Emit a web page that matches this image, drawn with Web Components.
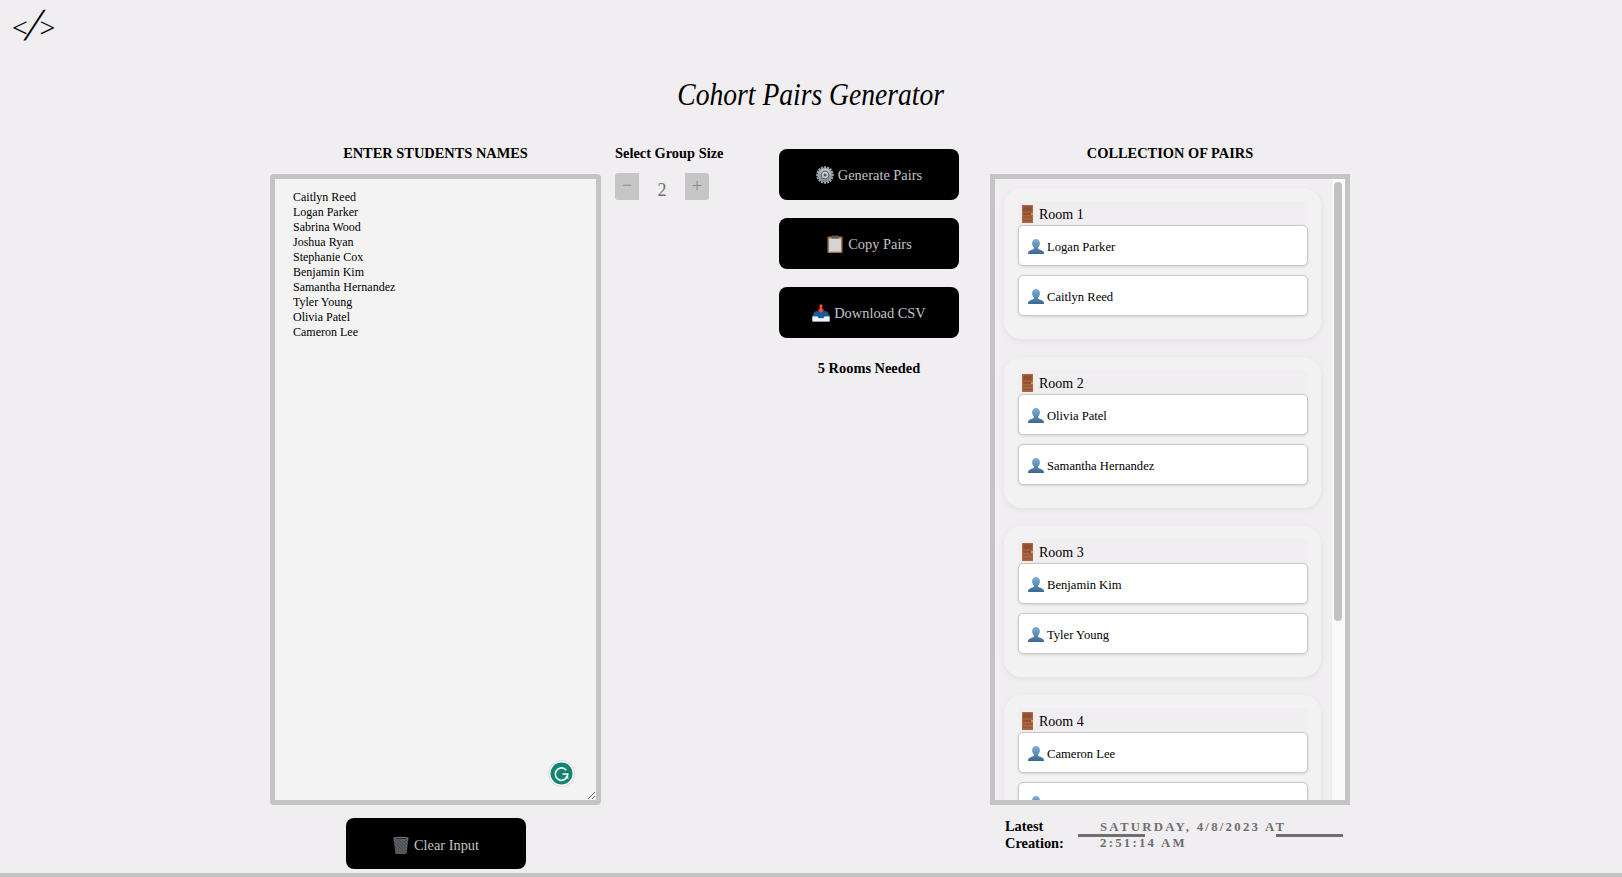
<!DOCTYPE html>
<html lang="en">
<head>
<meta charset="utf-8">
<title>Cohort Pairs Generator</title>
<style>
  html, body { margin: 0; height: 100%; }
  body { background: #f0eef0; font-family: "Liberation Serif", "Times New Roman", serif; overflow: hidden; }
</style>
</head>
<body>
<cohort-app></cohort-app>

<script>
const students = ['Caitlyn Reed', 'Logan Parker', 'Sabrina Wood', 'Joshua Ryan', 'Stephanie Cox', 'Benjamin Kim', 'Samantha Hernandez', 'Tyler Young', 'Olivia Patel', 'Cameron Lee']
// the second name of room 4 sits under the fold in the screenshot
const rooms = [
  ['Logan Parker', 'Caitlyn Reed'],
  ['Olivia Patel', 'Samantha Hernandez'],
  ['Benjamin Kim', 'Tyler Young'],
  ['Cameron Lee', '']
]

const icons = {
  gear: `<svg viewBox="0 0 18 18"><defs><linearGradient id="g" x1="0" y1="0" x2="0" y2="1"><stop offset="0" stop-color="#c4cad1"/><stop offset="1" stop-color="#7b828a"/></linearGradient></defs>
    <g fill="url(#g)"><circle cx="9" cy="9" r="7"/><g stroke="#9aa1a9" stroke-width="2.3"><path d="M9 .2v17.600M.2 9h17.600M2.800 2.800l12.400 12.400M15.200 2.800L2.800 15.200M5.600 1l6.800 16M12.400 1L5.600 17M1 5.600l16 6.800M1 12.400l16-6.800" stroke-dasharray="2.500 12.600"/></g></g>
    <circle cx="9" cy="9" r="4.300" fill="#59616a"/><circle cx="9" cy="9" r="3.200" fill="#c9ced4"/><circle cx="9" cy="9" r="1.500" fill="#4d545c"/></svg>`,
  clipboard: `<svg viewBox="0 0 18 18"><rect x="1.500" y="1.500" width="15" height="16.500" rx="1.200" fill="#a17a4c"/><rect x="3" y="3.600" width="12" height="13" fill="#d4d4d4"/><rect x="5.500" y=".5" width="7" height="3" rx=".8" fill="#5e5a55"/></svg>`,
  inbox: `<svg viewBox="0 0 18 18"><path d="M3 7.500h12l2.600 5v5H.4v-5z" fill="#2f7fc4"/><path d="M3.400 7.500h11.200l2 4.600h-4.400l-1 1.600H6.800l-1-1.600H1.400z" fill="#175a98"/><path d="M.4 12.600h5l1 1.700h5.200l1-1.700h5v5H.4z" fill="#f1f3f5"/><path d="M7.600.5h2.800v5h2.200l-3.600 3.500-3.600-3.500h2.200z" fill="#ef4b3f"/></svg>`,
  trash: `<svg viewBox="0 0 18 18"><defs><pattern id="m" width="2.400" height="2.400" patternUnits="userSpaceOnUse" patternTransform="rotate(45)"><rect width="2.400" height="2.400" fill="#5a6066"/><path d="M0 0h2.400" stroke="#2f3337" stroke-width=".9"/></pattern></defs>
    <path d="M1.500 1.800h15l-1.800 15.400q-.1.800-1 .8H4.300q-.9 0-1-.8z" fill="url(#m)"/><ellipse cx="9" cy="2.300" rx="7.700" ry="1.500" fill="#7a8086"/><ellipse cx="9" cy="2.500" rx="6.200" ry=".8" fill="#2a2d30"/></svg>`,
  door: `<svg viewBox="0 0 11 18"><rect width="11" height="18" rx=".5" fill="#ad6540"/><rect x="1.300" y="1.400" width="8.400" height="5" fill="#8f4f32"/><rect x="1.300" y="7.800" width="8.400" height="2" fill="#8f4f32"/><rect x="1.300" y="11.500" width="8.400" height="4.800" fill="#985636"/><rect x="1.300" y="13.400" width="8.400" height=".9" fill="#c07a52"/><circle cx="10" cy="9" r=".9" fill="#e2b23e"/></svg>`,
  person: `<svg viewBox="0 0 16 15"><defs><linearGradient id="p" x1="0" y1="0" x2="0" y2="1"><stop offset="0" stop-color="#7fb0d8"/><stop offset=".55" stop-color="#5a8ab4"/><stop offset="1" stop-color="#3c668f"/></linearGradient></defs>
    <path d="M8 0c2.400 0 3.900 1.900 3.900 4.300 0 1.700-.7 3.200-1.700 4.200-.2.800 0 1.300.7 1.700 1.700.8 3.800 1.300 4.700 2.600.3.500.4 1.200.4 2.200H0c0-1 .1-1.700.4-2.200.9-1.300 3-1.800 4.700-2.600.7-.4.900-.9.700-1.700-1-1-1.700-2.500-1.700-4.200C4.100 1.900 5.600 0 8 0z" fill="url(#p)"/></svg>`
}

customElements.define('ui-icon', class extends HTMLElement {
  connectedCallback () {
    const root = this.attachShadow({ mode: 'open' })
    root.innerHTML = `<style>
      :host { display: inline-block; flex: none; line-height: 0; }
      svg { width: 100%; height: 100%; display: block; }
    </style>${icons[this.getAttribute('name')]}`
  }
})

customElements.define('action-button', class extends HTMLElement {
  constructor () {
    super()
    this.attachShadow({ mode: 'open' }).innerHTML = `<style>
      :host { display: flex; width: 180px; height: 51px; box-sizing: border-box; padding-top: 1px; border-radius: 8px; background: #000; color: #c4c4c4;
        font-size: 14.4px; align-items: center; justify-content: center; gap: 4px; }
      ::slotted(ui-icon) { width: 18px; height: 18px; }
      .label { padding-top: 1px; }
    </style><slot name="icon"></slot><span class="label"><slot></slot></span>`
  }
})

customElements.define('group-stepper', class extends HTMLElement {
  constructor () {
    super()
    this.attachShadow({ mode: 'open' }).innerHTML = `<style>
      :host { display: flex; width: 94px; height: 27px; justify-content: space-between; color: #6f6f6f; }
      span { display: flex; align-items: center; justify-content: center; }
      .btn { width: 24px; height: 27px; background: #c6c6c6; color: #8b8b8b; font-size: 18px; box-sizing: border-box; }
      .minus { border-radius: 3px 0 0 3px; padding-bottom: 2px; }
      .plus { border-radius: 0 3px 3px 0; }
      .val { font-size: 18px; padding-top: 7px; }
    </style><span class="btn minus">&minus;</span><span class="val">2</span><span class="btn plus">+</span>`
  }
})

customElements.define('name-input', class extends HTMLElement {
  constructor () {
    super()
    this.attachShadow({ mode: 'open' }).innerHTML = `<style>
      :host { display: block; position: relative; height: 631px; }
      textarea { display: block; box-sizing: border-box; width: 100%; height: 100%; margin: 0; padding: 11px 18px;
        border: 5px solid #c4c4c4; border-radius: 4px; outline: none; background: #f3f3f4; color: #000;
        font: 12px/15px "Liberation Serif", serif; }
      .badge { position: absolute; right: 26px; bottom: 18px; width: 27px; height: 27px; }
    </style><textarea spellcheck="false"></textarea>
    <svg class="badge" viewBox="0 0 27 27"><circle cx="13.500" cy="13.500" r="13" fill="#fff" stroke="#d3d7e2"/><circle cx="13.500" cy="13.500" r="11" fill="#11856f"/>
    <path d="M18.300 10.200A6.200 6.200 0 1 0 19.700 14h-5.200" fill="none" stroke="#fff" stroke-width="1.700"/><path d="M17.200 17l3.200 2.200-.3-3.800z" fill="#fff"/></svg>`
    this.shadowRoot.querySelector('textarea').textContent = students.join('\n')
  }
})

customElements.define('student-card', class extends HTMLElement {
  constructor () {
    super()
    this.attachShadow({ mode: 'open' }).innerHTML = `<style>
      :host { display: flex; align-items: center; box-sizing: border-box; height: 41px; padding: 2px 9px 0; gap: 3px;
        background: #fff; border: 1px solid #c8c8c8; border-radius: 5px; box-shadow: 0 1px 3px rgba(0,0,0,.12);
        font-size: 12.6px; color: #000; }
      ui-icon { width: 16px; height: 15px; margin-top: -1px; }
      .name { padding-top: 2px; }
    </style><ui-icon name="person"></ui-icon><span class="name"><slot></slot></span>`
  }
})

customElements.define('room-card', class extends HTMLElement {
  constructor () {
    super()
    this.attachShadow({ mode: 'open' }).innerHTML = `<style>
      :host { display: block; padding: 13px 13px 23px 14px; border-radius: 18px; background: #f2f2f3; box-shadow: 0 2px 6px rgba(0,0,0,.06); }
      h3 { display: flex; align-items: flex-end; gap: 6px; margin: 0; height: 24px; padding-left: 4px; background: #f0eef0;
        font-size: 14px; font-weight: normal; line-height: 21px; color: #000; }
      ui-icon { width: 11px; height: 18px; margin-bottom: 2px; }
      ::slotted(student-card:not(:last-child)) { margin-bottom: 9px; }
    </style><h3><ui-icon name="door"></ui-icon><span></span></h3><slot></slot>`
  }

  connectedCallback () {
    this.shadowRoot.querySelector('span').textContent = this.getAttribute('label')
  }
})

customElements.define('room-list', class extends HTMLElement {
  constructor () {
    super()
    this.attachShadow({ mode: 'open' }).innerHTML = `<style>
      :host { display: flex; height: 631px; box-sizing: border-box; border: 5px solid #c4c4c4; background: #f0eef0; }
      .rooms { flex: 1; min-width: 0; overflow: hidden; box-sizing: border-box; padding: 9px 10px 0 9px; }
      .track { flex: none; width: 14px; box-sizing: border-box; padding: 3px 3px 0 2px; background: #fafafa; border-left: 1px solid #ececec; }
      .thumb { height: 439px; border-radius: 5px; background: #c1c1c1; }
      ::slotted(room-card:not(:last-child)) { margin-bottom: 18px; }
    </style><div class="rooms"><slot></slot></div><div class="track"><div class="thumb"></div></div>`
  }
})

customElements.define('latest-creation', class extends HTMLElement {
  constructor () {
    super()
    this.attachShadow({ mode: 'open' }).innerHTML = `<style>
      :host { display: flex; padding: 13px 7px 0 15px; }
      .label { width: 73px; font-size: 14.4px; font-weight: bold; line-height: 17px; color: #000; flex: none; }
      .date { position: relative; flex: 1; box-sizing: border-box; padding: 1px 22px 0; font-size: 12.8px; font-weight: bold;
        letter-spacing: 2.25px; line-height: 16.300px; color: #6f6f6f; text-transform: uppercase; }
      .date::before, .date::after { content: ""; position: absolute; top: 16px; width: 67px; height: 3px; background: #6f6f6f; }
      .date::before { left: 0; }
      .date::after { right: 0; }
    </style><div class="label">Latest Creation:</div><div class="date">Saturday, 4/8/2023 at 2:51:14 AM</div>`
  }
})

customElements.define('cohort-app', class extends HTMLElement {
  constructor () {
    super()
    this.attachShadow({ mode: 'open' }).innerHTML = `<style>
      :host { display: flex; flex-direction: column; height: 877px; box-sizing: border-box; border-bottom: 4px solid #c4c4c4; }
      .logo { display: flex; align-items: center; height: 50px; padding: 0 0 0 12px; box-sizing: border-box; font-size: 28px; color: #000; line-height: 34px; }
      .logo span { display: block; }
      .logo .lt, .logo .gt { padding-top: 6px; }
      .logo .slash { font-size: 46px; line-height: 40px; transform: skewX(-17deg); margin: 0 -1px 0 0; }
      h1 { margin: 0; height: 95px; padding-top: 23px; box-sizing: border-box; text-align: center; font-size: 32px; font-weight: normal; font-style: italic; line-height: 42px; color: #000; }
      h1 span { display: inline-block; transform: scaleX(.862); }
      .row { display: flex; justify-content: center; padding-right: 2px; }
      h2 { margin: 0 0 12px; height: 17px; font-size: 14.4px; line-height: 17px; font-weight: bold; text-align: center; color: #000; }
      .names { width: 331px; }
      .group { width: 110px; margin-left: 14px; }
      .group h2 { margin-bottom: 11px; white-space: nowrap; text-align: left; }
      .actions { width: 180px; margin-left: 54px; padding-top: 4px; }
      .actions action-button { margin-bottom: 18px; }
      .needed { margin-top: 22px; font-size: 14.4px; font-weight: bold; line-height: 17px; text-align: center; color: #000; }
      .pairs { width: 360px; margin-left: 31px; }
      .clear { margin: 13px auto 0; padding-top: 3px; }
    </style>
    <div class="logo"><span class="lt">&lt;</span><span class="slash">/</span><span class="gt">&gt;</span></div>
    <h1><span>Cohort Pairs Generator</span></h1>
    <div class="row">
      <section class="names">
        <h2>ENTER STUDENTS NAMES</h2>
        <name-input></name-input>
        <action-button class="clear"><ui-icon slot="icon" name="trash"></ui-icon>Clear Input</action-button>
      </section>
      <section class="group">
        <h2>Select Group Size</h2>
        <group-stepper></group-stepper>
      </section>
      <section class="actions">
        <action-button><ui-icon slot="icon" name="gear"></ui-icon>Generate Pairs</action-button>
        <action-button><ui-icon slot="icon" name="clipboard"></ui-icon>Copy Pairs</action-button>
        <action-button><ui-icon slot="icon" name="inbox"></ui-icon>Download CSV</action-button>
        <div class="needed">5 Rooms Needed</div>
      </section>
      <section class="pairs">
        <h2>COLLECTION OF PAIRS</h2>
        <room-list id="rooms"></room-list>
        <latest-creation></latest-creation>
      </section>
    </div>`
    const list = this.shadowRoot.querySelector('#rooms')
    rooms.forEach((pair, i) => {
      const room = document.createElement('room-card')
      room.setAttribute('label', `Room ${i + 1}`)
      pair.forEach(name => {
        const card = document.createElement('student-card')
        card.textContent = name
        room.appendChild(card)
      })
      list.appendChild(room)
    })
  }
})
</script>
</body>
</html>
